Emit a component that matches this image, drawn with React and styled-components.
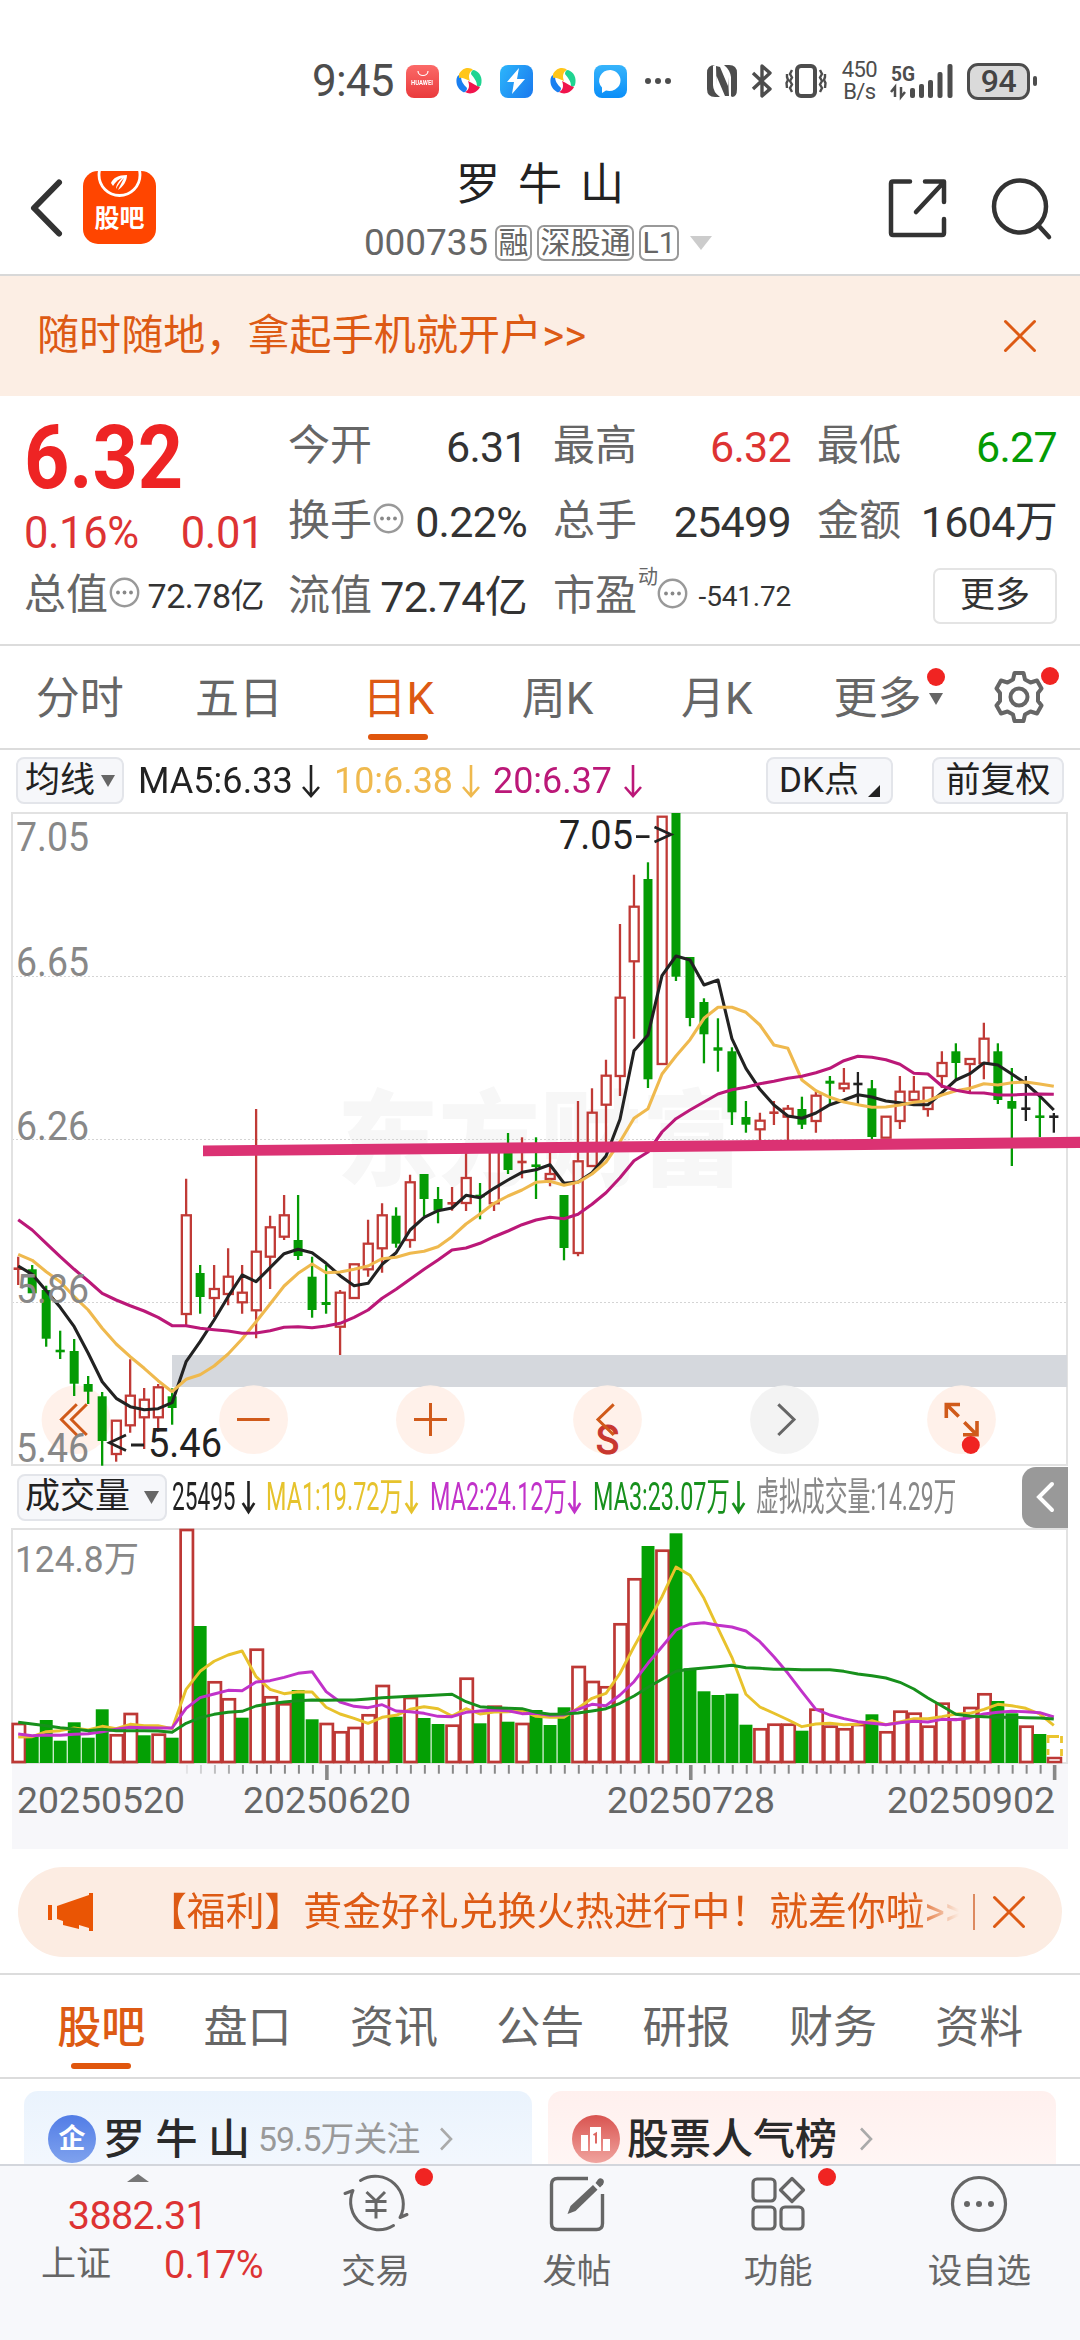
import React from "react";
import styled, { createGlobalStyle, css } from "styled-components";

const Global = createGlobalStyle`
  * { box-sizing: border-box; }
  html, body { margin: 0; padding: 0; background: #fff; }
  body { width: 1080px; height: 2340px; overflow: hidden; font-family: Roboto, "Noto Sans CJK SC", sans-serif; color: #333; }
  svg { display: block; flex: none; overflow: visible; }
`;

const ORANGE = "#dd5a14";
const RED = "#dd3333";
const GREEN = "#049b04";

/* ---------- market data, as plotted ---------- */
// kind, wick top, wick bottom, body top, body bottom
const CANDLES = [
  ["r", 1256.7, 1285, 1268.7, 1268.7], ["g", 1265, 1293, 1269.3, 1293.3], ["g", 1285.7, 1346.7, 1290, 1338.7],
  ["g", 1330.7, 1359, 1351, 1351], ["g", 1339, 1396, 1351, 1383.7], ["g", 1376, 1404, 1384, 1391.7],
  ["g", 1392, 1465.7, 1396.3, 1441], ["r", 1420.7, 1461.7, 1420.7, 1454], ["r", 1359.3, 1432.7, 1395.7, 1425.3],
  ["r", 1388, 1449, 1399.7, 1417.3], ["r", 1384, 1432, 1387.3, 1417.3], ["g", 1388.3, 1424.7, 1396.3, 1408],
  ["r", 1178.7, 1326, 1215.3, 1314], ["g", 1265, 1313.7, 1273, 1297], ["r", 1265, 1317, 1289, 1298],
  ["r", 1248.3, 1305.3, 1276.7, 1294], ["r", 1265, 1313.7, 1292.7, 1302.3], ["r", 1109, 1338.3, 1251.7, 1310.3],
  ["r", 1215.7, 1289, 1227.3, 1256.7], ["r", 1195, 1240, 1215.3, 1236.7], ["g", 1195, 1260, 1240, 1256],
  ["g", 1256.7, 1317.7, 1276.7, 1310], ["g", 1265, 1313.7, 1302, 1305], ["r", 1290, 1355, 1292.7, 1326.7],
  ["r", 1264.3, 1298, 1264.3, 1298], ["r", 1219.7, 1276.7, 1243.7, 1269.3], ["r", 1203.3, 1272.7, 1215.3, 1248.3],
  ["g", 1207.3, 1247.7, 1215.7, 1243.7], ["r", 1174.7, 1247.7, 1182.3, 1240], ["g", 1174, 1216, 1174, 1199],
  ["g", 1187, 1223.3, 1199, 1210.7], ["r", 1187, 1210.7, 1203.3, 1203.3], ["r", 1148, 1211, 1178, 1203],
  ["g", 1183, 1219.3, 1196, 1198], ["r", 1145, 1211, 1145, 1203.3], ["g", 1133, 1174, 1149, 1170],
  ["r", 1137.3, 1178.3, 1162, 1162], ["g", 1137.3, 1199, 1165.7, 1165.7], ["r", 1148, 1186.3, 1174, 1179],
  ["g", 1195, 1260.3, 1195, 1248], ["r", 1101, 1256.3, 1161.3, 1253], ["r", 1088.3, 1166, 1112.7, 1166],
  ["r", 1059.7, 1148, 1075.7, 1104.7], ["r", 924, 1096, 997.7, 1076], ["r", 874.7, 1038.7, 906.7, 961.3],
  ["g", 862.3, 1088, 879, 1079.3], ["r", 816.7, 1064, 816.7, 1064], ["g", 813, 981, 813, 976.7],
  ["g", 957, 1026.3, 957, 1018], ["g", 998.3, 1063.3, 1002, 1034.3], ["g", 1018.3, 1071.7, 1047.3, 1050.7],
  ["g", 1047.3, 1125, 1051.3, 1112.3], ["g", 1101, 1132.7, 1117, 1124.7], ["r", 1112.7, 1141, 1120.7, 1129.3],
  ["r", 1101, 1125, 1112.7, 1112.7], ["r", 1105, 1141, 1108.7, 1116.7], ["g", 1096.7, 1129, 1109, 1124.7],
  ["r", 1092, 1132.7, 1095.7, 1121], ["g", 1076, 1104.7, 1080.7, 1083.7], ["r", 1068, 1092, 1083.7, 1088.3],
  ["k", 1072, 1104, 1084, 1084], ["g", 1080, 1139, 1088.3, 1137], ["r", 1116.7, 1137.7, 1116.7, 1137.7],
  ["r", 1076, 1129, 1091.7, 1121], ["r", 1076, 1100, 1091.7, 1100], ["r", 1087.7, 1116.7, 1087.7, 1109],
  ["r", 1051.3, 1088, 1063, 1076], ["g", 1043.3, 1079, 1051.3, 1063], ["r", 1059, 1092.7, 1059, 1064],
  ["r", 1022.7, 1079.3, 1038.7, 1063.3], ["g", 1043.3, 1104, 1051.3, 1100], ["g", 1068, 1166, 1101, 1108.7],
  ["k", 1076, 1121, 1108.7, 1108.7], ["g", 1096, 1137, 1116.7, 1116.7], ["k", 1113, 1132.7, 1116.7, 1116.7],
];
const MA5 = [1266,1274.3,1290.7,1307.3,1326.7,1353.3,1381.7,1398.3,1406.7,1409.7,1408.7,1402.7,1361.7,1341.7,1320,1296.7,1275,1281.7,1267.7,1253.7,1249.3,1252.7,1263.3,1275.7,1285.7,1283.3,1264.3,1252.7,1230,1217.3,1210.7,1208,1195.3,1197.7,1188.3,1180,1172.3,1169.7,1164.7,1183.3,1182,1172.7,1156,1119.3,1050.7,1035,975.7,956,960,985,980,1038.7,1068.3,1089.3,1105,1116,1118.3,1113,1104.7,1100,1094.7,1097,1101,1102.7,1104.7,1104.7,1092.7,1080,1073.7,1063,1065,1074,1083.3,1096,1110];
const MA10 = [1254.3,1260.3,1271.7,1281.7,1296.7,1310,1328.3,1344,1356.7,1368.3,1380.7,1391.7,1379.3,1374.7,1366,1354,1339,1321.7,1304,1286,1273.3,1264,1272.7,1272,1269.3,1266,1258.7,1257.3,1253.3,1251.3,1246.7,1236.7,1224,1214,1203.3,1196,1190,1182.3,1181.3,1185.3,1182.3,1174,1162,1141.7,1118.3,1108.7,1074,1056,1039.7,1018.3,1007.3,1007.3,1012.3,1025,1045,1048.3,1080,1090.7,1097.3,1102,1104.7,1107.3,1107,1105,1102.3,1100.7,1095,1090.7,1088.3,1083.7,1085,1082.7,1082,1084,1086.3];
const MA20 = [1219.7,1230,1243.3,1256.7,1269.3,1281,1293.3,1300,1305.7,1311,1317.3,1325.7,1325.7,1328.3,1329.7,1331,1333.3,1333,1330.7,1327.3,1326.7,1327.7,1326,1323.3,1317.3,1310,1298.3,1289.3,1279.3,1269.3,1260,1250,1248,1243.3,1236.7,1231,1224.7,1220,1217.3,1218.7,1214.3,1204.3,1192.7,1177.7,1160.7,1152,1132,1118.7,1110,1102,1094,1089.7,1087.3,1083.7,1081.3,1078.3,1076.3,1072.7,1068.3,1060.7,1056.3,1057.3,1059.7,1064.3,1073.3,1074,1086,1090.3,1092.7,1093,1095,1095,1094.3,1094,1094.3];

const VOL_KIND = "rgggggg" + "rrgrgrg" + "rrgrrrggrrrrrgrggrrgrgrggg" + "rrrrrgrggggggrrrgrrrrgrrrrrrrrggrg";
const VOL_TOP = [1724,1736,1720,1740.7,1722.3,1737.7,1709.3,1735.3,1714,1735.3,1734.7,1737.7,1530,1626,1682.3,1699.3,1717.7,1649.7,1697.3,1704.3,1690,1719.3,1724,1732.3,1728,1715.3,1686,1716.7,1698,1718,1724,1725.7,1678.7,1723.3,1706.7,1721.7,1724,1710,1725,1707.3,1667,1682,1687.3,1624.3,1579.3,1546,1550.7,1533.3,1668.3,1691.3,1695,1693.7,1724.7,1729.3,1724.7,1724.7,1730.7,1709.7,1726.7,1729.3,1725,1714.3,1732.3,1711.7,1713.7,1726.7,1703.7,1719.3,1708,1694.3,1701,1713.3,1726.7,1734];
const VMA1 = [1737,1736.7,1731.7,1730.7,1728,1730,1726.3,1728.7,1724.3,1725.7,1725.7,1728.7,1689.3,1671.3,1661.3,1655,1651,1676.7,1689.3,1693.7,1691.7,1692,1707.3,1714,1718.3,1723.3,1717.3,1715.3,1709.3,1706.7,1708.7,1716,1708.7,1714,1712,1711.7,1710.7,1716.3,1717.3,1717.3,1708.3,1698.3,1693.3,1673.3,1646.7,1621.7,1596.7,1567,1575.3,1598.3,1628.3,1657.3,1694.3,1707,1713.3,1719.7,1726.7,1724,1723.3,1724.7,1724.3,1720.7,1724.7,1722,1718.7,1718.7,1716.7,1714,1713.3,1709.3,1704.3,1705.7,1708.3,1714,1725.3];
const VMA2 = [1734,1735.7,1735,1735.3,1734.3,1733.7,1731.7,1729.3,1727.3,1727.7,1728,1728,1708.3,1697.7,1694,1690.3,1690.7,1682,1680.7,1677.3,1673.3,1671.7,1691.7,1702,1706.3,1707.7,1704.7,1711,1711.7,1713.3,1716.3,1716.7,1712.3,1711,1710,1710.7,1713.7,1713.3,1715.3,1715,1709.3,1704.3,1705.7,1695,1681.7,1663.3,1646.7,1630,1624,1622.7,1625.3,1627,1631,1641.7,1656.7,1673.3,1691.7,1709.3,1715,1718.7,1721.7,1723.3,1724.7,1722.7,1721.3,1722,1719.3,1719.7,1717.7,1714,1712.3,1711.3,1711.7,1712.7,1717];
const VMA3 = [1722.3,1724,1725.7,1727.7,1729,1730.7,1729.3,1730.7,1730.7,1730.7,1731,1732.3,1723.3,1717.7,1714.3,1712.3,1711.3,1706,1703.7,1702,1700.7,1700,1700.3,1700,1700,1699,1697.7,1697,1696.3,1695.7,1695,1694.3,1701.7,1706.7,1707.7,1708.3,1708.7,1712.3,1714.3,1714,1713,1711,1708.7,1703.3,1696,1687.3,1679.3,1671.3,1669.3,1668,1666.7,1665.3,1667.7,1668.3,1669.3,1669.3,1669.7,1669.7,1669.7,1671.3,1674,1675.7,1678,1682.3,1689,1698,1706,1714.3,1716,1716.7,1717.3,1717.3,1717.7,1718,1719];

const px = (i) => 18.2 + i * 13.995;
const points = (ys) => ys.map((y, i) => `${px(i).toFixed(1)},${y}`).join(" ");

/* ---------- shared pieces ---------- */
const Page = styled.div`
  width: 1080px;
  height: 2340px;
  display: flex;
  flex-direction: column;
  background: #fff;
  overflow: hidden;
`;
const Condensed = styled.span`
  display: inline-block;
  white-space: nowrap;
  transform: scaleX(${(p) => p.$x || 1});
  transform-origin: ${(p) => p.$from || "left"} center;
`;
const Dot = styled.i`
  position: absolute;
  width: 18px;
  height: 18px;
  border-radius: 50%;
  background: #f02422;
  left: ${(p) => p.$left}px;
  top: ${(p) => p.$top}px;
`;
const Underline = styled.i`
  position: absolute;
  left: 50%;
  bottom: 8px;
  width: 60px;
  height: 6px;
  margin-left: -30px;
  border-radius: 3px;
  background: #e0560d;
`;
const DownTriangle = ({ w, h, color }) => (
  <svg width={w} height={h} viewBox="0 0 10 10" preserveAspectRatio="none">
    <path d="M0 0H10L5 10Z" fill={color} />
  </svg>
);
const Cross = ({ size = 32, w = 3 }) => (
  <svg width={size} height={size} viewBox="0 0 32 32" fill="none" stroke={ORANGE} strokeWidth={w} strokeLinecap="round">
    <path d="M1.5 1.5 30.5 30.5M30.5 1.5 1.5 30.5" />
  </svg>
);
const DownArrow = ({ w = 18, color }) => (
  <svg width={w} height="34" viewBox="0 0 18 34" preserveAspectRatio="none" fill="none" stroke={color} strokeWidth="2.6">
    <path d="M9 1V32M1 23 9 32 17 23" vectorEffect="non-scaling-stroke" />
  </svg>
);

/* ---------- status bar ---------- */
const StatusBar = styled.div`
  height: 140px;
  padding: 22px 0 0 312px;
  display: flex;
  align-items: center;
`;
const Clock = styled.div`
  width: 94px;
  font-size: 44px;
  line-height: 50px;
  color: #4d4d4d;
  letter-spacing: -0.8px;
`;
const AppIcons = styled.div`
  display: flex;
  align-items: center;
  justify-content: space-between;
  width: 266px;
`;
const HuaweiIcon = styled.div`
  width: 33px;
  height: 33px;
  border-radius: 8px;
  background: linear-gradient(#fb6a68, #ea3a3c);
  color: #fff;
  display: flex;
  flex-direction: column;
  align-items: center;
  padding-top: 5px;
  font-size: 7px;
  line-height: 9px;
  font-weight: 700;
`;
const BlueIcon = styled.div`
  width: 33px;
  height: 33px;
  border-radius: 8px;
  display: flex;
  align-items: center;
  justify-content: center;
  background: ${(p) => p.$bg};
`;
const SystemIcons = styled.div`
  margin-left: 35px;
  width: 330px;
  display: flex;
  align-items: center;
`;
const NetSpeed = styled.div`
  width: 42px;
  margin-left: 12px;
  display: flex;
  flex-direction: column;
  align-items: center;
  font-size: 22px;
  line-height: 22px;
  color: #4d4d4d;
  letter-spacing: -0.6px;
`;
const Battery = styled.div`
  width: 65px;
  height: 37px;
  margin-left: 13px;
  border: 3px solid #4d4d4d;
  border-radius: 11px;
  background: #dadada;
  color: #444;
  font-size: 32px;
  line-height: 31px;
  font-weight: 500;
  letter-spacing: -0.5px;
  text-align: center;
`;
const BatteryTip = styled.i`
  width: 4px;
  height: 10px;
  margin-left: 3px;
  border-radius: 2px;
  background: #4d4d4d;
`;
const Swirl = () => (
  <svg width="26" height="26" viewBox="0 0 26 26">
    <path d="M1 17C-1 9 3 5 5 8C5 13 7 16 11 20C11 23 9 25 7 24C4 22 2 20 1 17Z" fill="#1a7ff0" />
    <path d="M3 6C7-1 14-1 17 2C13 4 12 8 14 13C9 11 6 9 3 10Z" fill="#ffc61a" />
    <path d="M18 2C24 4 27 10 25 17C24 19 22 19 21 18C21 13 18 10 15 6C15 4 16 2 18 2Z" fill="#1fd491" />
    <path d="M24 19C21 25 14 27 9 24C13 22 14 18 12 13C17 15 20 18 24 19Z" fill="#f0144c" />
  </svg>
);

const Status = () => (
  <StatusBar>
    <Clock>9:45</Clock>
    <AppIcons>
      <HuaweiIcon>
        <svg width="12" height="9" viewBox="0 0 12 9" fill="none" stroke="#fff" strokeWidth="1.2"><path d="M1 1C1 7 11 7 11 1" /></svg>
        <Condensed $x={0.84} $from="center">HUAWEI</Condensed>
      </HuaweiIcon>
      <Swirl />
      <BlueIcon $bg="linear-gradient(120deg,#2cb6fb,#1a78ee)">
        <svg width="20" height="26" viewBox="0 0 20 26"><path d="M13 0 1 14H8L6 26 19 11H11Z" fill="#fff" /></svg>
      </BlueIcon>
      <Swirl />
      <BlueIcon $bg="linear-gradient(#37b4fb,#0a8ef8)">
        <svg width="25" height="25" viewBox="0 0 25 25"><path d="M12.5 1A11.300 10.500 0 1 1 8 21.500L4 24V18.500A11 10.500 0 0 1 12.500 1Z" fill="#fff" /></svg>
      </BlueIcon>
      <svg width="28" height="8" viewBox="0 0 28 8" fill="#4d4d4d"><circle cx="4" cy="4" r="3" /><circle cx="14" cy="4" r="3" /><circle cx="24" cy="4" r="3" /></svg>
    </AppIcons>
    <SystemIcons>
      <svg width="30" height="32" viewBox="0 0 30 32">
        <path d="M17 0H22Q30 0 30 8V24Q30 32 25 32L24 31V12Q23 5 17 0Z" fill="#4d4d4d" />
        <path d="M8 0Q0 0 0 8V24Q0 32 8 32H13Q6 27 6 20V1Z" fill="#4d4d4d" />
        <path d="M9 1 13 2 21 21V12L22 31 18 31 9.500 11V20Z" fill="#4d4d4d" />
      </svg>
      <svg width="22" height="36" viewBox="0 0 22 36" style={{ marginLeft: 14 }} fill="none" stroke="#4d4d4d" strokeWidth="3.4">
        <path d="M2 10 19 26 11 33V3L19 10 2 26" strokeLinejoin="round" />
      </svg>
      <svg width="42" height="34" viewBox="0 0 42 34" style={{ marginLeft: 12 }} fill="none" stroke="#4d4d4d" strokeWidth="3">
        <rect x="12" y="2" width="18" height="30" rx="4" strokeWidth="4" />
        <path d="M7 6 5 10 7 13.500 5 17 7 20.500 5 24 7 28M2 10V13L3 16 1.500 19 2 24M35 6 37 10 35 13.500 37 17 35 20.500 37 24 35 28M40 10V13L39 16 40.500 19 40 24" strokeWidth="2.400" />
      </svg>
      <NetSpeed><span>450</span><span>B/s</span></NetSpeed>
      <svg width="64" height="36" viewBox="0 0 64 36" style={{ marginLeft: 10 }} fill="#4d4d4d">
        <text x="1" y="18" fontSize="20" fontWeight="700" textLength="24" lengthAdjust="spacingAndGlyphs">5G</text>
        <path d="M5 34V24L1 29M11 24V34L15 29" fill="none" stroke="#4d4d4d" strokeWidth="2.500" />
        <rect x="20" y="25" width="5" height="10" rx="2" /><rect x="29" y="21" width="5" height="14" rx="2" />
        <rect x="38" y="17" width="5" height="18" rx="2" /><rect x="47.500" y="9" width="5" height="26" rx="2" /><rect x="57.500" y="1" width="5" height="34" rx="2" />
      </svg>
      <Battery>94</Battery>
      <BatteryTip />
    </SystemIcons>
  </StatusBar>
);

/* ---------- header ---------- */
const Header = styled.header`
  height: 136px;
  border-bottom: 2px solid #d8d8d8;
  display: grid;
  grid-template-columns: 330px 1fr 330px;
`;
const HeaderSide = styled.div`
  display: flex;
  align-items: center;
  padding: ${(p) => p.$pad};
`;
const GubaBadge = styled.div`
  width: 73px;
  height: 73px;
  margin-left: 19px;
  border-radius: 15px;
  background: #ff4500;
  overflow: hidden;
  color: #fff;
  font-weight: 700;
  font-size: 25px;
  line-height: 28px;
  text-align: center;
  svg { margin-bottom: 1px; }
`;
const TitleColumn = styled.div`
  display: flex;
  flex-direction: column;
  align-items: center;
  padding-top: 22px;
`;
const StockName = styled.h1`
  margin: 0;
  font-size: 44px;
  line-height: 46px;
  font-weight: 400;
  word-spacing: 7px;
  color: #222;
`;
const CodeLine = styled.div`
  display: flex;
  align-items: center;
  height: 38px;
  margin-top: 16px;
  padding-right: 4px;
  color: #666;
  font-size: 37px;
  line-height: 38px;
`;
const Code = styled.span`
  letter-spacing: -0.1px;
  margin-right: 7px;
`;
const Tag = styled.span`
  height: 36px;
  padding: 0 1.5px;
  margin-right: 5px;
  border: 2px solid #999;
  border-radius: 7px;
  font-size: 30px;
  line-height: 32px;
`;

/* ---------- promo ---------- */
const Promo = styled.div`
  height: 120px;
  background: #fceee4;
  display: flex;
  align-items: center;
  justify-content: space-between;
  padding: 0 44px 0 37px;
  font-size: 42px;
  letter-spacing: 0.1px;
  color: ${ORANGE};
`;
const PromoText = styled.span`
  line-height: 50px;
`;

/* ---------- quote ---------- */
const Quote = styled.section`
  height: 250px;
  border-bottom: 2px solid #dcdcdc;
  display: flex;
  padding-left: 24px;
`;
const PriceColumn = styled.div`
  width: 264px;
  color: ${RED};
`;
const Price = styled.div`
  height: 122px;
  font-size: 89px;
  line-height: 124px;
  font-weight: 700;
  color: #ee2424;
`;
const Change = styled.div`
  display: flex;
  justify-content: space-between;
  width: 240px;
  height: 30px;
  line-height: 32px;
  font-size: 43.500px;
  letter-spacing: -0.4px;
`;
const Cell = styled.div`
  display: flex;
  align-items: center;
  height: ${(p) => p.$h || 75}px;
  width: ${(p) => p.$w || "auto"};
  white-space: nowrap;
`;
const Label = styled.span`
  font-size: 42px;
  line-height: 50px;
  padding-bottom: 1px;
  color: #666;
`;
const Value = styled.span`
  margin-left: auto;
  font-size: ${(p) => p.$size || 43}px;
  line-height: 50px;
  letter-spacing: ${(p) => p.$ls ?? -0.7}px;
  color: ${(p) => p.$color || "#333"};
`;
const Stats = styled.div`
  display: grid;
  grid-template-columns: 239px 238px 240px;
  grid-auto-rows: 75px;
  column-gap: 26px;
  padding-top: 13px;
`;
const Sup = styled.span`
  font-size: 20px;
  line-height: 20px;
  color: #666;
  margin: -40px -2px 0 1px;
`;
const MoreButton = styled.button`
  margin-left: auto;
  margin-bottom: 2px;
  width: 124px;
  height: 56px;
  border: 2px solid #e4e4e4;
  border-radius: 7px;
  background: #fff;
  font: 35px/50px Roboto, "Noto Sans CJK SC", sans-serif;
  color: #333;
  padding: 0;
`;
const Hint = () => (
  <svg width="31" height="31" viewBox="0 0 31 31" style={{ marginTop: -7, marginLeft: 1 }}>
    <circle cx="15.500" cy="15.500" r="13.700" fill="none" stroke="#999" strokeWidth="2.400" />
    <circle cx="9" cy="15.500" r="1.900" fill="#888" /><circle cx="15.500" cy="15.500" r="1.900" fill="#888" /><circle cx="22" cy="15.500" r="1.900" fill="#888" />
  </svg>
);

/* ---------- period tabs ---------- */
const PeriodTabs = styled.nav`
  height: 104px;
  border-bottom: 2px solid #dcdcdc;
  display: flex;
  font-size: 44px;
`;
const tabText = css`
  position: relative;
  display: flex;
  align-items: center;
  justify-content: center;
  color: ${(p) => (p.$active ? ORANGE : "#666")};
  font-weight: ${(p) => p.$weight || 400};
  line-height: 60px;
  padding-top: 3px;
`;
const PeriodTab = styled.div`
  ${tabText}
  width: 159.300px;
`;
const MoreTab = styled.div`
  ${tabText}
  width: 184px;
  gap: 8px;
`;
const GearTab = styled.div`
  ${tabText}
  width: 78px;
  padding-top: 0;
`;

/* ---------- indicator rows ---------- */
const IndicatorRow = styled.div`
  height: ${(p) => p.$h}px;
  display: flex;
  align-items: center;
  padding: ${(p) => p.$pad};
  font-size: ${(p) => p.$size}px;
`;
const Chip = styled.div`
  width: ${(p) => p.$w}px;
  height: 47px;
  border: 2px solid #e3e5ea;
  border-radius: 8px;
  background: #f6f7fa;
  color: #222;
  font-size: 35px;
  line-height: 42px;
  display: flex;
  align-items: center;
  justify-content: center;
  gap: ${(p) => p.$gap || 0}px;
  margin-left: ${(p) => p.$ml ?? 0};
  margin-right: ${(p) => p.$mr || 0}px;
  white-space: nowrap;
`;
const CornerMark = styled.svg`
  align-self: flex-end;
  margin-bottom: 5px;
`;
const Reading = styled.div`
  display: flex;
  align-items: center;
  width: ${(p) => p.$w}px;
  color: ${(p) => p.$color};
`;
const ReadingText = styled.div`
  width: ${(p) => p.$w}px;
  flex: none;
  line-height: 44px;
`;
const PanelToggle = styled.div`
  width: 46px;
  height: 61px;
  margin-left: auto;
  background: #999;
  border-radius: 14px 0 0 14px;
  display: flex;
  align-items: center;
  justify-content: center;
`;

/* ---------- charts ---------- */
const MARK = { r: "#c03a36", g: GREEN, k: "#222" };
const Candle = ({ x, kind, hi, lo, top, bottom }) => {
  const c = MARK[kind];
  if (bottom - top < 2.5) {
    return <g stroke={c}><path d={`M${x} ${hi}V${lo}`} strokeWidth="2.3" /><path d={`M${x - 4.6} ${top}H${x + 4.600}`} strokeWidth="2.6" /></g>;
  }
  if (kind === "g") {
    return <g><path d={`M${x} ${hi}V${lo}`} stroke={c} strokeWidth="2.3" /><rect x={x - 4.500} y={top} width="9" height={bottom - top} fill={c} /></g>;
  }
  return (
    <g stroke={c} fill="none" strokeWidth="2.3">
      <path d={`M${x} ${hi}V${top}M${x} ${bottom}V${lo}`} />
      <rect x={x - 4.300} y={top} width="9" height={bottom - top} />
    </g>
  );
};
const AXIS = [["7.05", 851.3], ["6.65", 976.3], ["6.26", 1140], ["5.86", 1303], ["5.46", 1462]];

const PriceChart = () => (
  <svg width="1080" height="655" viewBox="0 811 1080 655">
    <text x="337" y="1178" fontSize="104" fontWeight="900" fill="#f7f7f7" textLength="406" lengthAdjust="spacingAndGlyphs">东方财富</text>
    <g stroke="#d4d4d4" strokeWidth="1" strokeDasharray="2 2">
      <path d="M12 976.500H1067M12 1139.500H1067M12 1302.500H1067" />
    </g>
    <path d="M12 813H1067V1465H12Z" fill="none" stroke="#e2e2e2" strokeWidth="2" />
    <rect x="172" y="1355" width="895" height="32" fill="#d5d8dd" />
    {[76, 253.6, 430.4, 607.500, 784.500, 961.500].map((cx, i) => (
      <circle key={cx} cx={cx} cy="1419.700" r="34.400" fill={i === 4 ? "#f2f2f2" : "#fff0e8"} fillOpacity="0.930" />
    ))}
    {CANDLES.map(([kind, hi, lo, top, bottom], i) => (
      <Candle key={i} x={px(i)} kind={kind} hi={hi} lo={lo} top={top} bottom={bottom} />
    ))}
    <g fill="none" strokeWidth="3.100" strokeLinejoin="round">
      <polyline points={points(MA5)} stroke="#222" />
      <polyline points={points(MA10)} stroke="#efb94e" />
      <polyline points={points(MA20)} stroke="#bb1878" />
    </g>
    <g fontSize="40" fill="#888">
      {AXIS.map(([t, y]) => <text key={t} x="16" y={y} textLength="73" lengthAdjust="spacingAndGlyphs">{t}</text>)}
    </g>
    <g fontSize="40" fill="#222">
      <text x="559" y="848.700" textLength="74" lengthAdjust="spacingAndGlyphs">7.05</text>
      <text x="148" y="1456.700" textLength="74" lengthAdjust="spacingAndGlyphs">5.46</text>
      <path d="M636 836.700H649.500M654.500 827 671 834.500 654.500 842M131 1445H144M126 1435 109.500 1442.700 126 1450.400" fill="none" stroke="#222" strokeWidth="2.800" />
    </g>
    <path d="M203 1145.500 1080 1136.800V1148L203 1156.300Z" fill="#db3273" />
    <text x="596" y="1453.500" fontSize="41" fill="#c8372f" stroke="#c8372f" strokeWidth="1.2" textLength="23" lengthAdjust="spacingAndGlyphs">S</text>
    <g fill="none" stroke="#d05a1a" strokeWidth="3">
      <path d="M76.800 1404.300 61.400 1419.500 76.800 1435M86.800 1404.300 71.400 1419.500 86.800 1435" />
      <path d="M237 1419.500H269.600M414 1419.500H447M430.500 1403V1436" />
      <path d="M613.700 1404.300 598 1419.500 613.700 1435" />
      <path d="M960 1404.500H946.300V1418M947 1405 958.700 1416.500M963 1434.700H977V1421M976 1434 964.300 1422.300" strokeWidth="3.600" />
      <path d="M778.300 1404.300 794 1419.500 778.300 1435" stroke="#666" />
    </g>
    <circle cx="970.800" cy="1445" r="9" fill="#f02422" />
  </svg>
);

const DATES = [["20250520", 17, 168], ["20250620", 243, 168], ["20250728", 607, 168], ["20250902", 887, 168]];
const VolumeChart = () => (
  <svg width="1080" height="321" viewBox="0 1528 1080 321">
    <rect x="12" y="1763" width="1056" height="86" fill="#f7f7fa" />
    <path d="M12 1529H1067V1763H12Z" fill="none" stroke="#e2e2e2" strokeWidth="2" />
    <text x="15" y="1571.700" fontSize="36.500" fill="#888" textLength="124" lengthAdjust="spacingAndGlyphs">124.8万</text>
    {VOL_TOP.map((y, i) => VOL_KIND[i] === "g"
      ? <rect key={i} x={px(i) - 6.400} y={y} width="12.900" height={1763 - y} fill="#04a004" />
      : <rect key={i} x={px(i) - 5.500} y={y} width="12.300" height={1762 - y} fill="#fff" stroke="#bd3835" strokeWidth="2.700" />)}
    <rect x="1048" y="1758" width="13" height="4" fill="#fff" stroke="#bd3835" strokeWidth="2.500" />
    <path d="M1048 1755V1749M1048 1743V1736.500H1059M1061.500 1736V1743M1061.500 1749V1756" fill="none" stroke="#ebc52e" strokeWidth="2.800" />
    <g fill="none" strokeWidth="2.900" strokeLinejoin="round">
      <polyline points={points(VMA1)} stroke="#e8c22c" />
      <polyline points={points(VMA2)} stroke="#c132c9" />
      <polyline points={points(VMA3)} stroke="#17901c" />
    </g>
    <g stroke="#888">
      {CANDLES.map((_, i) => {
        if (i < 12) return null;
        const major = i === 22 || i === 48 || i === 74;
        return <path key={i} d={`M${px(i) + 0.800} 1765V${major ? 1780 : 1773.700}`} strokeWidth={major ? 3.600 : 2} opacity={i < 17 ? (i - 11) / 6 : 1} />;
      })}
    </g>
    <g fontSize="37.500" fill="#666">
      {DATES.map(([t, x, w]) => <text key={t} x={x} y="1812.700" textLength={w} lengthAdjust="spacingAndGlyphs">{t}</text>)}
    </g>
  </svg>
);

/* ---------- notice pill ---------- */
const Notice = styled.div`
  height: 90px;
  margin: 18px 18px 16px;
  border-radius: 45px;
  background: #fcece2;
  color: ${ORANGE};
  display: flex;
  align-items: center;
  padding: 0 37px 0 30px;
`;
const NoticeText = styled.div`
  width: 812px;
  margin-left: 54px;
  overflow: hidden;
  white-space: nowrap;
  font-size: 38.850px;
  line-height: 60px;
  mask-image: linear-gradient(to right, #000 765px, transparent 811px);
`;
const Divider = styled.i`
  width: 2px;
  height: 36px;
  margin: 0 18px 0 13px;
  background: #dd8a60;
`;

/* ---------- section tabs ---------- */
const SectionTabs = styled.nav`
  height: 106px;
  border-top: 2px solid #dcdcdc;
  border-bottom: 2px solid #dcdcdc;
  display: flex;
  padding: 0 27.5px 0 28px;
  font-size: 44px;
`;
const SectionTab = styled.div`
  ${tabText}
  flex: 1;
`;

/* ---------- cards ---------- */
const Cards = styled.div`
  height: 85px;
  display: flex;
  gap: 16px;
  padding: 12px 24px 0;
  overflow: hidden;
`;
const Card = styled.div`
  flex: 1;
  height: 150px;
  border-radius: 14px;
  background: linear-gradient(${(p) => p.$bg});
  padding: 17px 0 0 24px;
`;
const CardHead = styled.div`
  display: flex;
  align-items: center;
  height: 62px;
`;
const CardIcon = styled.div`
  width: 48px;
  height: 48px;
  border-radius: 50%;
  background: linear-gradient(${(p) => p.$bg});
  display: flex;
  align-items: center;
  justify-content: center;
  color: #fff;
  font-size: 27px;
  line-height: 30px;
  font-weight: 700;
`;
const CardTitle = styled.span`
  margin-left: 7px;
  font-size: 42px;
  line-height: 50px;
  padding-top: 1px;
  font-weight: 500;
  color: #2a2a2a;
`;
const CardSub = styled.span`
  margin-left: 8px;
  font-size: 33.800px;
  line-height: 50px;
  padding-top: 2px;
  letter-spacing: -0.800px;
  color: #999;
`;
const CardChevron = ({ ml }) => (
  <svg width="14" height="24" viewBox="0 0 14 24" style={{ marginLeft: ml }} fill="none" stroke="#aaa" strokeWidth="2.600"><path d="M2 1.500 12 12 2 22.500" /></svg>
);

/* ---------- bottom bar ---------- */
const BottomBar = styled.footer`
  height: 176px;
  border-top: 2px solid #d3d6dc;
  background: #f7f8fb;
  display: flex;
`;
const IndexBox = styled.div`
  width: 275px;
  display: flex;
  flex-direction: column;
  align-items: center;
  padding-top: 8px;
`;
const IndexValue = styled.div`
  margin-top: 13px;
  font-size: 39.5px;
  line-height: 42px;
  letter-spacing: -0.600px;
  color: ${RED};
`;
const IndexLine = styled.div`
  width: 275px;
  padding: 0 12px 0 41px;
  margin-top: 2px;
  display: flex;
  justify-content: space-between;
  font-size: 35px;
  line-height: 52px;
  color: #666;
`;
const IndexPct = styled.span`
  font-size: 38px;
  letter-spacing: -0.600px;
  color: ${RED};
`;
const NavItem = styled.div`
  position: relative;
  width: 201.500px;
  display: flex;
  flex-direction: column;
  align-items: center;
  padding-top: 8px;
  font-size: 34.500px;
  line-height: 50px;
  color: #666;
  svg { margin-bottom: 12px; }
`;

export default function App() {
  return (
    <Page>
      <Global />
      <Status />
      <Header>
        <HeaderSide $pad="1px 0 0 29px">
          <svg width="35" height="58" viewBox="0 0 35 58" fill="none" stroke="#333" strokeWidth="6" strokeLinecap="round" strokeLinejoin="round"><path d="M30 3.500 5 29 30 54.500" /></svg>
          <GubaBadge>
            <svg width="73" height="33" viewBox="0 0 73 33">
              <circle cx="36.500" cy="4" r="20.500" fill="none" stroke="#fff" strokeWidth="2.800" />
              <path d="M28 12C30 7 35 4 44 4C44 10 40 16 35 19C37 15 39 11 41 7C38 10 35 14 33 18C33 14 36 10 39 7C34 9 32 12 30 15Z" fill="#fff" />
            </svg>
            股吧
          </GubaBadge>
        </HeaderSide>
        <TitleColumn>
          <StockName>罗 牛 山</StockName>
          <CodeLine>
            <Code>000735</Code><Tag>融</Tag><Tag>深股通</Tag><Tag>L1</Tag>
            <svg width="22" height="14" viewBox="0 0 10 10" preserveAspectRatio="none" style={{ marginLeft: 6 }}><path d="M0 0H10L5 10Z" fill="#ccc" /></svg>
          </CodeLine>
        </TitleColumn>
        <HeaderSide $pad="2px 0 0 137px">
          <svg width="60" height="60" viewBox="0 0 60 60" fill="none" stroke="#333" strokeWidth="4.500" strokeLinecap="round" strokeLinejoin="round">
            <path d="M23 3.500H6Q4 3.500 4 5.500V55Q4 57 6 57H55Q57 57 57 55V41M38 3.500H57V24M56 5 29 34" />
          </svg>
          <svg width="62" height="62" viewBox="0 0 62 62" style={{ marginLeft: 43 }} fill="none" stroke="#333" strokeWidth="4.500" strokeLinecap="round">
            <circle cx="30" cy="29.500" r="26" /><path d="M48 48 59 60" />
          </svg>
        </HeaderSide>
      </Header>

      <Promo>
        <PromoText>随时随地，拿起手机就开户&gt;&gt;</PromoText>
        <Cross />
      </Promo>

      <Quote>
        <PriceColumn>
          <Price><Condensed $x={0.89}>6.32</Condensed></Price>
          <Change><span>0.16%</span><span>0.01</span></Change>
          <Cell $h={95} $w="240px"><Label>总值</Label><Hint /><Value $size={34} $ls={-0.5}>72.78亿</Value></Cell>
        </PriceColumn>
        <Stats>
          <Cell><Label>今开</Label><Value>6.31</Value></Cell>
          <Cell><Label>最高</Label><Value $color={RED}>6.32</Value></Cell>
          <Cell><Label>最低</Label><Value $color={GREEN}>6.27</Value></Cell>
          <Cell><Label>换手</Label><Hint /><Value>0.22%</Value></Cell>
          <Cell><Label>总手</Label><Value>25499</Value></Cell>
          <Cell><Label>金额</Label><Value>1604万</Value></Cell>
          <Cell><Label>流值</Label><Value>72.74亿</Value></Cell>
          <Cell><Label>市盈</Label><Sup>动</Sup><Hint /><Value $size={28} $ls={-0.2}>-541.72</Value></Cell>
          <Cell><MoreButton>更多</MoreButton></Cell>
        </Stats>
      </Quote>

      <PeriodTabs>
        <PeriodTab>分时</PeriodTab>
        <PeriodTab>五日</PeriodTab>
        <PeriodTab $active>日K<Underline /></PeriodTab>
        <PeriodTab>周K</PeriodTab>
        <PeriodTab>月K</PeriodTab>
        <MoreTab>更多<DownTriangle w={14} h={12} color="#666" /><Dot $left={131} $top={22} /></MoreTab>
        <GearTab>
          <svg width="54" height="54" viewBox="0 0 54 54" fill="none" stroke="#666" strokeWidth="4" strokeLinejoin="round">
            <path d="M22.500 3H31.500L33 9.500 38.500 12.500 45 10.500 49.500 18.500 46 23V31L49.500 35.500 45 43.500 38.500 41.500 33 44.500 31.500 51H22.500L21 44.500 15.500 41.500 9 43.500 4.500 35.500 8 31V23L4.500 18.500 9 10.500 15.500 12.500 21 9.500Z" />
            <circle cx="27" cy="27" r="8.500" />
          </svg>
          <Dot $left={61} $top={21} />
        </GearTab>
      </PeriodTabs>

      <IndicatorRow $h={61} $pad="0 16px 0 16px" $size={37}>
        <Chip $w={108} $gap={6} $mr={14}>均线<DownTriangle w={14} h={12} color="#666" /></Chip>
        <Reading $w={196} $color="#222"><ReadingText $w={164}><Condensed $x={0.975}>MA5:6.33</Condensed></ReadingText><DownArrow color="#222" /></Reading>
        <Reading $w={159} $color="#efb94e"><ReadingText $w={128}><Condensed $x={0.97}>10:6.38</Condensed></ReadingText><DownArrow color="#efb94e" /></Reading>
        <Reading $w={150} $color="#bb1878"><ReadingText $w={131}><Condensed $x={0.97}>20:6.37</Condensed></ReadingText><DownArrow color="#bb1878" /></Reading>
        <Chip $w={127} $gap={9} $ml="auto">
          DK点
          <CornerMark width="12" height="12" viewBox="0 0 12 12"><path d="M12 0V12H0Z" fill="#222" /></CornerMark>
        </Chip>
        <Chip $w={132} $ml="39px">前复权</Chip>
      </IndicatorRow>

      <PriceChart />

      <IndicatorRow $h={62} $pad="0 12px 0 17px" $size={39}>
        <Chip $w={150} $gap={14} $mr={5}>成交量<DownTriangle w={15} h={13} color="#666" /></Chip>
        <Reading $w={94} $color="#222"><ReadingText $w={70}><Condensed $x={0.58}>25495</Condensed></ReadingText><DownArrow w={13} color="#222" /></Reading>
        <Reading $w={164} $color="#e6c32d"><ReadingText $w={139}><Condensed $x={0.6}>MA1:19.72万</Condensed></ReadingText><DownArrow w={13} color="#e6c32d" /></Reading>
        <Reading $w={163} $color="#c132c9"><ReadingText $w={138}><Condensed $x={0.6}>MA2:24.12万</Condensed></ReadingText><DownArrow w={13} color="#c132c9" /></Reading>
        <Reading $w={163} $color="#17901c"><ReadingText $w={139}><Condensed $x={0.6}>MA3:23.07万</Condensed></ReadingText><DownArrow w={13} color="#17901c" /></Reading>
        <Reading $w={200} $color="#888"><ReadingText $w={200}><Condensed $x={0.587}>虚拟成交量:14.29万</Condensed></ReadingText></Reading>
        <PanelToggle>
          <svg width="20" height="32" viewBox="0 0 20 32" fill="none" stroke="#fff" strokeWidth="4" strokeLinecap="round"><path d="M17 3 4 16 17 29" /></svg>
        </PanelToggle>
      </IndicatorRow>

      <VolumeChart />

      <Notice>
        <svg width="46" height="40" viewBox="0 0 46 40" fill="#ea5504">
          <rect x="0" y="13" width="4" height="15" />
          <path d="M9 14 41 3V1H45V39H41V36L31 33V37L15 33V29L9 27Z" />
        </svg>
        <NoticeText>【福利】黄金好礼兑换火热进行中！就差你啦&gt;&gt;</NoticeText>
        <Divider />
        <Cross />
      </Notice>

      <SectionTabs>
        <SectionTab $active $weight={500}>股吧<Underline /></SectionTab>
        {["盘口", "资讯", "公告", "研报", "财务", "资料"].map((t) => <SectionTab key={t}>{t}</SectionTab>)}
      </SectionTabs>

      <Cards>
        <Card $bg="#eaf3fd, #fbfcff">
          <CardHead>
            <CardIcon $bg="#527de6, #7fa2ee">企</CardIcon>
            <CardTitle>罗 牛 山</CardTitle>
            <CardSub>59.5万关注</CardSub>
            <CardChevron ml={19} />
          </CardHead>
        </Card>
        <Card $bg="#fff0ee, #fffcfb">
          <CardHead>
            <CardIcon $bg="#d95450, #f0a49f">
              <svg width="30" height="26" viewBox="0 0 30 26" fill="#fff">
                <path d="M0 9H7V25H0ZM9 1H20V25H9ZM22 13H29V25H22Z" />
                <path d="M12.500 9 15 7.500V17.500" fill="none" stroke="#dd6762" strokeWidth="2" />
              </svg>
            </CardIcon>
            <CardTitle>股票人气榜</CardTitle>
            <CardChevron ml={22} />
          </CardHead>
        </Card>
      </Cards>

      <BottomBar>
        <IndexBox>
          <svg width="22" height="8" viewBox="0 0 22 8"><path d="M11 0 22 8H0Z" fill="#777" /></svg>
          <IndexValue>3882.31</IndexValue>
          <IndexLine><span>上证</span><IndexPct>0.17%</IndexPct></IndexLine>
        </IndexBox>
        <NavItem>
          <svg width="66" height="60" viewBox="0 0 66 60" fill="none" stroke="#666" strokeWidth="3" strokeLinejoin="round" strokeLinecap="round">
            <path d="M17.500 6.500A28 28 0 0 1 57 43.500L64 40.500" />
            <path d="M50.500 51.500A28 28 0 0 1 10 16.500L2 19.500" />
            <path d="M23.500 18 33 27 42 18M22.500 27.500H43.500M22.500 36.500H43.500M33 27V44.500" strokeLinecap="butt" />
          </svg>
          交易
          <Dot $left={140} $top={2} />
        </NavItem>
        <NavItem>
          <svg width="58" height="60" viewBox="0 0 58 60" fill="none" stroke="#666" strokeWidth="3.400">
            <path d="M40 4.500H9.500Q3.500 4.500 3.500 10.500V49.500Q3.500 55.500 9.500 55.500H48.500Q54.500 55.500 54.500 49.500V20" />
            <path d="M47.500 9 52 13.500 55 10.500Q57 7 54.500 5Q52 3.200 50 5.500Z" fill="#666" stroke="none" />
            <path d="M45 11 49.500 15.800 27.500 37 19.500 40 22.500 32Z" fill="#666" stroke="none" />
          </svg>
          发帖
        </NavItem>
        <NavItem>
          <svg width="56" height="60" viewBox="0 0 56 60" fill="none" stroke="#666" strokeWidth="3.200" strokeLinejoin="round">
            <rect x="3" y="5" width="22" height="22" rx="4" /><rect x="3" y="33" width="22" height="22" rx="4" /><rect x="31" y="33" width="22" height="22" rx="4" />
            <path d="M42 4.500 53.500 16 42 27.500 30.500 16Z" />
          </svg>
          功能
          <Dot $left={140} $top={2} />
        </NavItem>
        <NavItem>
          <svg width="60" height="60" viewBox="0 0 60 60">
            <circle cx="30" cy="30" r="26.500" fill="none" stroke="#666" strokeWidth="3.200" />
            <circle cx="18" cy="30" r="3" fill="#666" /><circle cx="30" cy="30" r="3" fill="#666" /><circle cx="42" cy="30" r="3" fill="#666" />
          </svg>
          设自选
        </NavItem>
      </BottomBar>
    </Page>
  );
}
